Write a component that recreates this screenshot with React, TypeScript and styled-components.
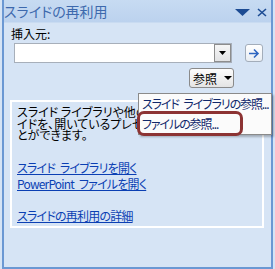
import React from "react";
import styled, { createGlobalStyle } from "styled-components";

const Global = createGlobalStyle`
  html, body { margin: 0; padding: 0; background: #d6e4f5; }
  body { width: 275px; height: 269px; overflow: hidden; font-family: "Noto Sans CJK JP", "Liberation Sans", sans-serif; font-feature-settings: "palt" 1; }
`;

const Panel = styled.div`
  box-sizing: border-box;
  margin-left: 2px;
  width: 271px;
  height: 269px;
  border: 2px solid #6b98d3;
  border-top: none;
  background: #d6e4f5;
  display: flex;
  flex-direction: column;
`;

const TitleBar = styled.div`
  height: 22px;
  flex: none;
  display: flex;
  align-items: center;
  padding: 0 4px 0 0;
  background: linear-gradient(#c7dbf2, #bcd2ee);
  border-bottom: 1px solid #c9dbf1;
`;

const Title = styled.div`
  flex: 1;
  font-size: 14px;
  line-height: 22px;
  color: #3d69ad;
  white-space: nowrap;
`;

const TitleIcons = styled.div`
  display: flex;
  align-items: center;
  gap: 7px;
  margin-top: 3px;
`;

const Body = styled.div`
  flex: 1;
  display: flex;
  flex-direction: column;
  padding: 4px 7px 0 6px;
`;

const Label = styled.div`
  font-size: 12px;
  line-height: 14px;
  color: #000;
  margin-left: 1px;
`;

const InputRow = styled.div`
  display: flex;
  align-items: flex-start;
  margin: 2px 0 0 4px;
`;

const Combo = styled.div`
  box-sizing: border-box;
  width: 218px;
  height: 20px;
  background: #fff;
  border: 1px solid #a7afba;
  display: flex;
  justify-content: flex-end;
`;

const ComboButton = styled.div`
  box-sizing: border-box;
  width: 17px;
  height: 18px;
  border: 1px solid #8d8d8d;
  background: linear-gradient(#f6f6f6, #e2e3e5);
  display: flex;
  align-items: center;
  justify-content: center;
`;

const GoButton = styled.div`
  box-sizing: border-box;
  width: 18px;
  height: 18px;
  margin: 1px 0 0 13px;
  border: 1px solid #a3adba;
  border-radius: 3px;
  background: linear-gradient(#ffffff, #e8edf3);
  display: flex;
  align-items: center;
  justify-content: center;
`;

const BrowseRow = styled.div`
  position: relative;
  display: flex;
  justify-content: flex-end;
  margin-top: 5px;
  padding-right: 30px;
  z-index: 2;
`;

const BrowseButton = styled.div`
  box-sizing: border-box;
  width: 45px;
  height: 20px;
  border: 1px solid #8a8a8a;
  border-radius: 3px;
  background: linear-gradient(#fdfdfd, #e4e4e4);
  display: flex;
  align-items: center;
  gap: 7px;
  padding-left: 3px;
  font-size: 12px;
  color: #000;
`;

const Menu = styled.div`
  position: absolute;
  top: 25px;
  right: -8px;
  box-sizing: border-box;
  width: 134px;
  border: 1px solid #8a8a8a;
  background: #fbfbfb;
  box-shadow: 2px 2px 2px rgba(0, 0, 0, 0.25);
`;

const MenuItem = styled.div`
  height: 20px;
  line-height: 20px;
  padding-left: 3px;
  font-size: 12px;
  letter-spacing: -1.1px;
  word-spacing: 3px;
  color: #10286b;
  white-space: nowrap;
`;

const Highlight = styled.div`
  position: absolute;
  left: -2px;
  top: 17px;
  width: 106px;
  height: 25px;
  box-sizing: border-box;
  border: 3px solid #8c3333;
  border-radius: 7px;
`;

const InfoBox = styled.div`
  box-sizing: border-box;
  width: 254px;
  height: 128px;
  margin-top: 12px;
  border: 2px solid #ffffff;
  padding: 4px 5px 0 5px;
  overflow: hidden;
`;

const Para = styled.div`
  font-size: 12px;
  line-height: 11.5px;
  color: #000;
  white-space: nowrap;
`;

const Links = styled.div`
  display: flex;
  flex-direction: column;
  align-items: flex-start;
  margin-top: 19px;
`;

const Link = styled.a<{ $gap?: number }>`
  font-size: 12px;
  line-height: 16px;
  letter-spacing: -0.8px;
  word-spacing: 3px;
  color: #0b3fb3;
  text-decoration: underline;
  margin-top: ${(p) => p.$gap ?? 0}px;
  white-space: nowrap;
`;

export default function App() {
  return (
    <>
      <Global />
      <Panel>
        <TitleBar>
          <Title>スライドの再利用</Title>
          <TitleIcons>
            <svg width="15" height="7" viewBox="0 0 15 7">
              <polygon points="0,0 15,0 7.5,7" fill="#1c4b93" />
            </svg>
            <svg width="10" height="9" viewBox="0 0 10 9">
              <path d="M1 1 L9 8 M9 1 L1 8" stroke="#1c4b93" strokeWidth="1.6" />
            </svg>
          </TitleIcons>
        </TitleBar>
        <Body>
          <Label>挿入元:</Label>
          <InputRow>
            <Combo>
              <ComboButton>
                <svg width="7" height="4" viewBox="0 0 7 4">
                  <polygon points="0,0 7,0 3.5,4" fill="#000" />
                </svg>
              </ComboButton>
            </Combo>
            <GoButton>
              <svg width="12" height="11" viewBox="0 0 12 11">
                <path d="M1 5.5 H10 M6 1.5 L10 5.5 L6 9.5" stroke="#2f66c0" strokeWidth="1.6" fill="none" />
              </svg>
            </GoButton>
          </InputRow>
          <BrowseRow>
            <BrowseButton>
              <span>参照</span>
              <svg width="8" height="4" viewBox="0 0 8 4">
                <polygon points="0,0 8,0 4,4" fill="#000" />
              </svg>
            </BrowseButton>
            <Menu>
              <MenuItem>スライド ライブラリの参照...</MenuItem>
              <MenuItem>ファイルの参照...</MenuItem>
              <Highlight />
            </Menu>
          </BrowseRow>
          <InfoBox>
            <Para>
              スライド ライブラリや他のプレゼンテーションからスラ
              <br />
              イドを、開いているプレゼンテーションに挿入するこ
              <br />
              とができます。
            </Para>
            <Links>
              <Link>スライド ライブラリを開く</Link>
              <Link>PowerPoint ファイルを開く</Link>
              <Link $gap={16}>スライドの再利用の詳細</Link>
            </Links>
          </InfoBox>
        </Body>
      </Panel>
    </>
  );
}
